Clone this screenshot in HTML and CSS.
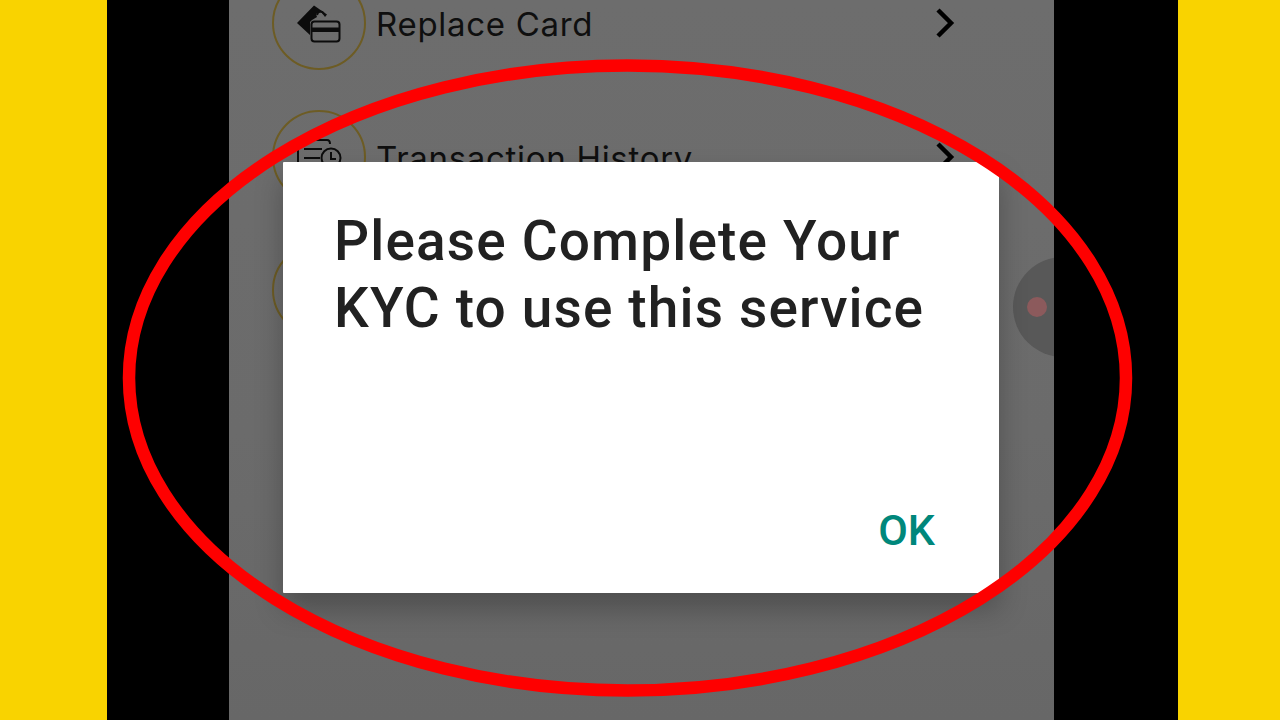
FILE: index.html
```html
<!DOCTYPE html>
<html lang="en">
<head>
<meta charset="utf-8">
<title>Please Complete Your KYC</title>
<link rel="stylesheet" href="styles.css">
</head>
<body>
<main class="stage">
  <div class="band band-left"></div>
  <div class="pillar pillar-left"></div>
  <section class="phone">
    <ul class="menu">
      <li class="row">
        <span class="badge">
          <svg class="icon" viewBox="0 0 46 46" width="46" height="46">
            <path class="solid" d="M1 23L18 5.500 31 14.500 29 17 26 13 23 12 20 14 21 17 16 20 14 22 14 35Z"/>
            <path class="line" d="M21 15C22 11 26 10 28 14"/>
            <rect class="line" x="15.500" y="21.500" width="28" height="20" rx="3"/>
            <rect class="solid" x="15.500" y="27.500" width="28" height="4.500"/>
          </svg>
        </span>
        <span class="label">Replace Card</span>
        <svg class="chevron" viewBox="0 0 20 30" width="20" height="30"><path d="M3 2L16 15 3 28"/></svg>
      </li>
      <li class="row">
        <span class="badge">
          <svg class="icon" viewBox="0 0 46 46" width="46" height="46">
            <path class="line" d="M2 30V6H31C33 6 34 7 34 10"/>
            <path class="line" d="M8 15H26M8 24H24"/>
            <circle class="line" cx="35" cy="24" r="9.500"/>
            <path class="line" d="M35 18V25H40"/>
          </svg>
        </span>
        <span class="label">Transaction History</span>
        <svg class="chevron" viewBox="0 0 20 30" width="20" height="30"><path d="M3 2L16 15 3 28"/></svg>
      </li>
      <li class="row">
        <span class="badge"></span>
      </li>
    </ul>
    <div class="floater"><span class="floater-dot"></span></div>
    <div class="dialog" role="dialog">
      <h1 class="dialog-title">Please Complete Your KYC to use this service</h1>
      <div class="dialog-actions"><span class="dialog-ok">OK</span></div>
    </div>
  </section>
  <div class="pillar pillar-right"></div>
  <div class="band band-right"></div>
  <svg class="ring" viewBox="0 0 1280 720" width="1280" height="720" aria-hidden="true">
    <ellipse cx="627.500" cy="378" rx="498.500" ry="312.500"/>
  </svg>
</main>
</body>
</html>
```
FILE: styles.css
```css
* { box-sizing: border-box; }

html, body {
  margin: 0;
  height: 100%;
  overflow: hidden;
  background: #000;
}

.stage {
  position: relative;
  display: flex;
  width: 1280px;
  height: 720px;
  overflow: hidden;
}

.band { background: #f9d300; }
.band-left { width: 107px; }
.band-right { width: 102px; }

.pillar { background: #000; }
.pillar-left { width: 122px; }
.pillar-right { width: 124px; }

.phone {
  position: relative;
  width: 825px;
  height: 720px;
  overflow: hidden;
  background: linear-gradient(#6d6d6d, #6b6b6b 60%, #676767);
}

.menu {
  display: flex;
  flex-direction: column;
  gap: 39.500px;
  margin: -24px 0 0;
  padding: 0 99px 0 43px;
  list-style: none;
}

.row {
  display: flex;
  align-items: center;
  gap: 10px;
  height: 94px;
}

.badge {
  display: flex;
  align-items: center;
  justify-content: center;
  flex: none;
  width: 94px;
  height: 94px;
  border: 2px solid #6d5c24;
  border-radius: 50%;
}

.icon { display: block; }

.solid { fill: #0c0c0c; }
.line { fill: none; stroke: #0c0c0c; stroke-width: 2; }

.label {
  flex: 1;
  padding-top: 2px;
  font-family: Inter, "Liberation Sans", sans-serif;
  font-size: 33px;
  font-weight: 400;
  letter-spacing: 0.700px;
  color: #0f0f0f;
  white-space: nowrap;
}

.chevron { flex: none; }
.chevron path { fill: none; stroke: #000; stroke-width: 4.500; }

.floater {
  position: absolute;
  left: 784px;
  top: 257px;
  display: flex;
  align-items: center;
  width: 100px;
  height: 100px;
  padding-left: 14px;
  border-radius: 50%;
  background: #585858;
}

.floater-dot {
  width: 20px;
  height: 20px;
  border-radius: 50%;
  background: #8c5a5c;
}

.dialog {
  position: absolute;
  left: 54px;
  top: 162px;
  display: flex;
  flex-direction: column;
  justify-content: space-between;
  width: 716px;
  height: 431px;
  padding: 46px 64px 38px 51px;
  background: #fff;
  border-radius: 1px;
  box-shadow: 0 16px 28px rgba(0, 0, 0, 0.25);
}

.dialog-title {
  margin: 0;
  font-family: Roboto, "Liberation Sans", sans-serif;
  font-size: 55px;
  font-weight: 500;
  letter-spacing: 1.150px;
  line-height: 67px;
  color: #212121;
}

.dialog-actions {
  display: flex;
  justify-content: flex-end;
}

.dialog-ok {
  font-family: Roboto, "Liberation Sans", sans-serif;
  font-size: 43px;
  font-weight: 500;
  line-height: 50px;
  color: #00877b;
}

.ring {
  position: absolute;
  left: 0;
  top: 0;
}

.ring ellipse {
  fill: none;
  stroke: #fe0000;
  stroke-width: 12.500;
}
```
